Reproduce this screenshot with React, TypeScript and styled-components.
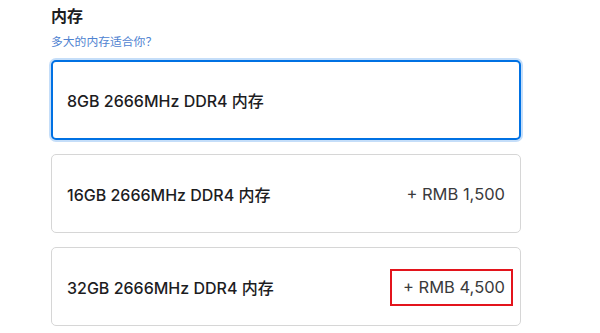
import styled, { createGlobalStyle } from "styled-components";

const GlobalStyle = createGlobalStyle`
  html, body {
    margin: 0;
    background: #ffffff;
  }
  body {
    font-family: Inter, "Noto Sans CJK SC", sans-serif;
    color: #1d1d1f;
  }
`;

const Section = styled.section`
  width: 470px;
  padding: 6px 0 0 51px;
`;

const Title = styled.h2`
  margin: 0;
  font-size: 16px;
  font-weight: 700;
  line-height: 20px;
  color: #1d1d1f;
`;

const HelpLink = styled.a`
  display: block;
  margin-top: 9px;
  font-size: 11.8px;
  line-height: 14px;
  color: #4f83d1;
  text-decoration: none;
`;

const Options = styled.div`
  display: flex;
  flex-direction: column;
  gap: 14px;
  margin-top: 11px;
`;

const Option = styled.div<{ $selected?: boolean }>`
  box-sizing: border-box;
  height: ${(p) => (p.$selected ? "80px" : "79px")};
  display: flex;
  align-items: center;
  justify-content: space-between;
  padding: 0 15px 0 ${(p) => (p.$selected ? "14px" : "15px")};
  border-radius: 5px;
  border: ${(p) => (p.$selected ? "2px solid #0071e3" : "1px solid #d6d6d6")};
  box-shadow: ${(p) => (p.$selected ? "0 0 0 2px #c5def9" : "none")};
  background: #fff;
`;

const Name = styled.span`
  font-size: 16px;
  font-weight: 500;
  color: #1d1d1f;
`;

const Price = styled.span`
  font-size: 16.5px;
  color: #3a3a3c;
`;

const Marked = styled(Price)`
  position: relative;
  &::after {
    content: "";
    position: absolute;
    left: -13px;
    right: -8px;
    top: -8px;
    bottom: -9px;
    border: 2px solid #e3141c;
  }
`;

const options = [
  { name: "8GB 2666MHz DDR4 内存", price: "" },
  { name: "16GB 2666MHz DDR4 内存", price: "+ RMB 1,500" },
  { name: "32GB 2666MHz DDR4 内存", price: "+ RMB 4,500", marked: true },
];

export default function App() {
  return (
    <>
      <GlobalStyle />
      <Section>
        <Title>内存</Title>
        <HelpLink href="#">多大的内存适合你？</HelpLink>
        <Options>
          {options.map((o, i) => (
            <Option key={o.name} $selected={i === 0}>
              <Name>{o.name}</Name>
              {o.marked ? <Marked>{o.price}</Marked> : o.price && <Price>{o.price}</Price>}
            </Option>
          ))}
        </Options>
      </Section>
    </>
  );
}
